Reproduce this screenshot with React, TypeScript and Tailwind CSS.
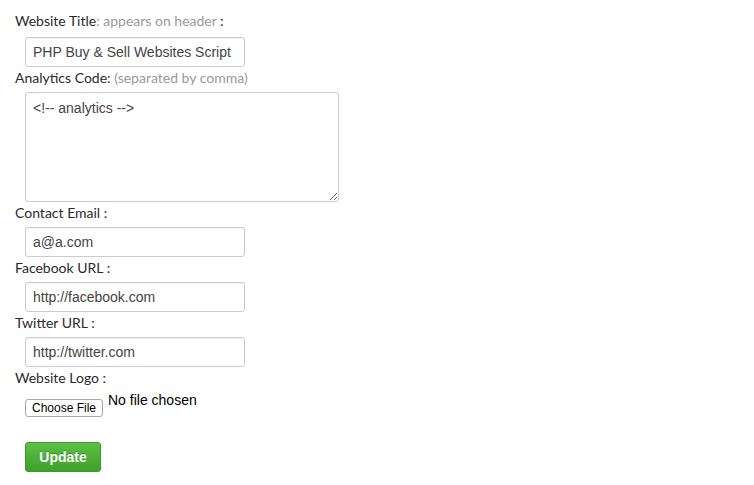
const label = "block text-[14px] leading-[18px] text-[#2a2a2a] font-['Lato','Noto_Sans',sans-serif]";
const hint = "text-[#999]";
const input =
  "block h-[30px] w-[220px] rounded-[3px] border border-[#ccc] bg-white px-[7px] text-[14px] text-[#444] font-['Liberation_Sans',Arial,sans-serif] outline-none shadow-[inset_0_1px_1px_rgba(0,0,0,0.05)]";

function Field({ title, value }: { title: string; value: string }) {
  return (
    <div className="pt-[2px]">
      <label className={label}>{title} :</label>
      <div className="pl-[10px] pt-[5px]">
        <input type="text" defaultValue={value} className={input} />
      </div>
    </div>
  );
}

export default function App() {
  return (
    <div className="min-h-[485px] w-[754px] bg-white pl-[15px] pt-[12px]">
      <div>
        <label className={label}>
          Website Title<span className={hint}>: appears on header </span>:
        </label>
        <div className="pl-[10px] pt-[7px]">
          <input type="text" defaultValue="PHP Buy & Sell Websites Script" className={input} />
        </div>
      </div>
      <div className="pt-[2px]">
        <label className={label}>
          Analytics Code: <span className={hint}>(separated by comma)</span>
        </label>
        <div className="pl-[10px] pt-[5px]">
          <textarea
            defaultValue="<!-- analytics -->"
            className="block h-[110px] w-[314px] rounded-[3px] border border-[#ccc] bg-white px-[7px] py-[5px] text-[14px] text-[#444] font-['Liberation_Sans',Arial,sans-serif] outline-none"
          />
        </div>
      </div>
      <Field title="Contact Email" value="a@a.com" />
      <Field title="Facebook URL" value="http://facebook.com" />
      <Field title="Twitter URL" value="http://twitter.com" />
      <div className="pt-[2px]">
        <label className={label}>Website Logo :</label>
        <div className="flex items-start pl-[10px] pt-[5px]">
          <button
            type="button"
            className="mt-[7px] h-[18px] w-[78px] rounded-[3px] border border-[#aaa] bg-white text-[12px] leading-[16px] text-black font-['Liberation_Sans',Arial,sans-serif]"
          >
            Choose File
          </button>
          <span className="ml-[5px] text-[14px] leading-[17px] text-black font-['Liberation_Sans',Arial,sans-serif]">
            No file chosen
          </span>
        </div>
      </div>
      <div className="pl-[10px] pt-[25px]">
        <button
          type="button"
          className="h-[30px] w-[76px] rounded-[3px] border border-[#3b9a2a] bg-gradient-to-b from-[#5cc146] to-[#3da02b] text-[14px] font-bold text-white [text-shadow:0_-1px_0_rgba(0,0,0,0.25)] font-['Liberation_Sans',Arial,sans-serif]"
        >
          Update
        </button>
      </div>
    </div>
  );
}
